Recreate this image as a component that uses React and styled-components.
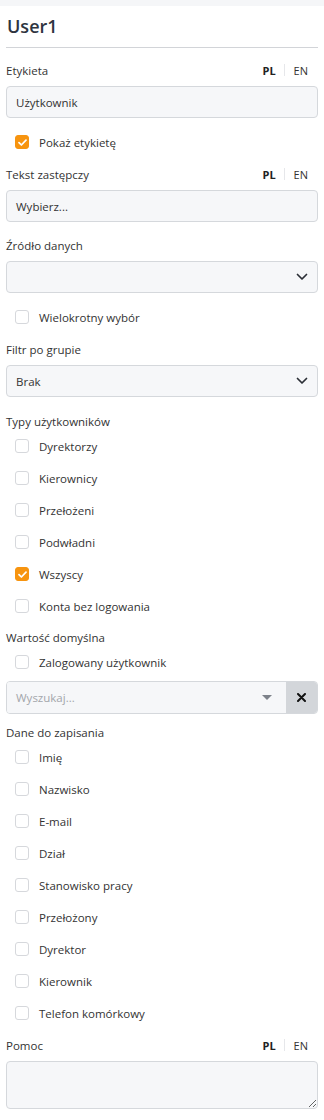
import React from 'react';
import styled, { createGlobalStyle } from 'styled-components';

const GlobalStyle = createGlobalStyle`
  body {
    margin: 0;
    background: #fff;
    font-family: "Open Sans", "Noto Sans", sans-serif;
    color: #333;
  }
`;

const TopStrip = styled.div`
  height: 6px;
  background: #f5f6f8;
`;

const Panel = styled.div`
  display: flex;
  flex-direction: column;
  padding: 0 6px 12px;
`;

const Title = styled.div`
  font: 600 18px "Open Sans", sans-serif;
  color: #2e3440;
  height: 41px;
  line-height: 41px;
  padding-left: 1px;
  border-bottom: 1px solid #d2d4d8;
`;

const LabelRow = styled.div`
  display: flex;
  justify-content: space-between;
  align-items: center;
  height: 20px;
  margin-top: ${(p) => p.$mt ?? 12}px;
  font-size: 11.5px;
  color: #333;
`;

const Lang = styled.div`
  display: flex;
  align-items: center;
  font-size: 11px;
  margin-right: 10px;
`;

const LangItem = styled.span`
  font-weight: ${(p) => (p.$active ? 700 : 400)};
  color: ${(p) => (p.$active ? '#222' : '#333')};
`;

const LangSep = styled.span`
  width: 1px;
  height: 12px;
  margin: 0 9px 0 8px;
  background: #e6e7ea;
`;

const Input = styled.div`
  box-sizing: border-box;
  height: 32px;
  margin-top: 6px;
  display: flex;
  align-items: center;
  justify-content: space-between;
  padding: 0 9px;
  background: #f6f7f9;
  border: 1px solid #d5d8dc;
  border-radius: 4px;
  font-size: 11.5px;
  color: #333;
`;

const Chevron = () => (
  <svg width="12" height="8" viewBox="0 0 12 8">
    <path d="M1.5 1.5 6 6l4.5-4.5" fill="none" stroke="#2b2f36" strokeWidth="1.7" strokeLinecap="round" strokeLinejoin="round" />
  </svg>
);

const SearchBox = styled.div`
  display: flex;
  height: 31px;
  margin-top: 9px;
  border: 1px solid #d5d8dc;
  border-radius: 4px;
  overflow: hidden;
`;

const SearchField = styled.div`
  flex: 1;
  display: flex;
  align-items: center;
  justify-content: space-between;
  padding: 0 14px 0 9px;
  background: #f6f7f9;
  font-size: 11.5px;
  color: #a3a6ab;
`;

const Caret = styled.span`
  width: 0;
  height: 0;
  border-left: 5px solid transparent;
  border-right: 5px solid transparent;
  border-top: 5px solid #7d828a;
`;

const ClearButton = styled.div`
  width: 31px;
  display: flex;
  align-items: center;
  justify-content: center;
  background: #d3d6da;
`;

const CheckRow = styled.label`
  display: flex;
  align-items: center;
  height: 20px;
  margin-top: ${(p) => p.$mt ?? 12}px;
  padding-left: 9px;
  font-size: 11.5px;
  color: #333;
`;

const Box = styled.span`
  box-sizing: border-box;
  width: 14px;
  height: 14px;
  margin-right: 10px;
  border-radius: 3px;
  display: flex;
  align-items: center;
  justify-content: center;
  background: ${(p) => (p.$checked ? '#f7940f' : '#fff')};
  border: 1px solid ${(p) => (p.$checked ? '#f7940f' : '#d6d8dc')};
`;

const TextArea = styled.textarea`
  box-sizing: border-box;
  height: 48px;
  margin-top: 6px;
  width: 100%;
  background: #f6f7f9;
  border: 1px solid #d5d8dc;
  border-radius: 4px;
  outline: none;
  font: 12px "Open Sans", sans-serif;
`;

function LangSwitch() {
  return (
    <Lang>
      <LangItem $active>PL</LangItem>
      <LangSep />
      <LangItem>EN</LangItem>
    </Lang>
  );
}

function Check({ label, checked, mt }) {
  return (
    <CheckRow $mt={mt}>
      <Box $checked={checked}>
        {checked && (
          <svg width="9" height="7" viewBox="0 0 9 7">
            <path d="M1 3.6 3.4 6 8 1.2" fill="none" stroke="#fff" strokeWidth="1.7" strokeLinecap="round" strokeLinejoin="round" />
          </svg>
        )}
      </Box>
      {label}
    </CheckRow>
  );
}

const userTypes = [
  ['Dyrektorzy', false],
  ['Kierownicy', false],
  ['Przełożeni', false],
  ['Podwładni', false],
  ['Wszyscy', true],
  ['Konta bez logowania', false],
];

const saveFields = [
  'Imię',
  'Nazwisko',
  'E-mail',
  'Dział',
  'Stanowisko pracy',
  'Przełożony',
  'Dyrektor',
  'Kierownik',
  'Telefon komórkowy',
];

export default function App() {
  return (
    <>
      <GlobalStyle />
      <TopStrip />
      <Panel>
        <Title>User1</Title>

        <LabelRow $mt={12}>
          Etykieta
          <LangSwitch />
        </LabelRow>
        <Input>Użytkownik</Input>
        <Check label="Pokaż etykietę" checked mt={14} />

        <LabelRow>
          Tekst zastępczy
          <LangSwitch />
        </LabelRow>
        <Input>Wybierz...</Input>

        <LabelRow $mt={13}>Źródło danych</LabelRow>
        <Input>
          <span />
          <Chevron />
        </Input>
        <Check label="Wielokrotny wybór" mt={14} />

        <LabelRow>Filtr po grupie</LabelRow>
        <Input>
          Brak
          <Chevron />
        </Input>

        <LabelRow $mt={14}>Typy użytkowników</LabelRow>
        {userTypes.map(([label, checked], i) => (
          <Check key={label} label={label} checked={checked} mt={i === 0 ? 5 : 12} />
        ))}

        <LabelRow $mt={11}>Wartość domyślna</LabelRow>
        <Check label="Zalogowany użytkownik" mt={5} />
        <SearchBox>
          <SearchField>
            Wyszukaj...
            <Caret />
          </SearchField>
          <ClearButton>
            <svg width="9" height="9" viewBox="0 0 9 9">
              <path d="M1 1l7 7M8 1 1 8" stroke="#111" strokeWidth="2" strokeLinecap="round" />
            </svg>
          </ClearButton>
        </SearchBox>

        <LabelRow $mt={8}>Dane do zapisania</LabelRow>
        {saveFields.map((label, i) => (
          <Check key={label} label={label} mt={i === 0 ? 5 : 12} />
        ))}

        <LabelRow>
          Pomoc
          <LangSwitch />
        </LabelRow>
        <TextArea />
      </Panel>
    </>
  );
}
